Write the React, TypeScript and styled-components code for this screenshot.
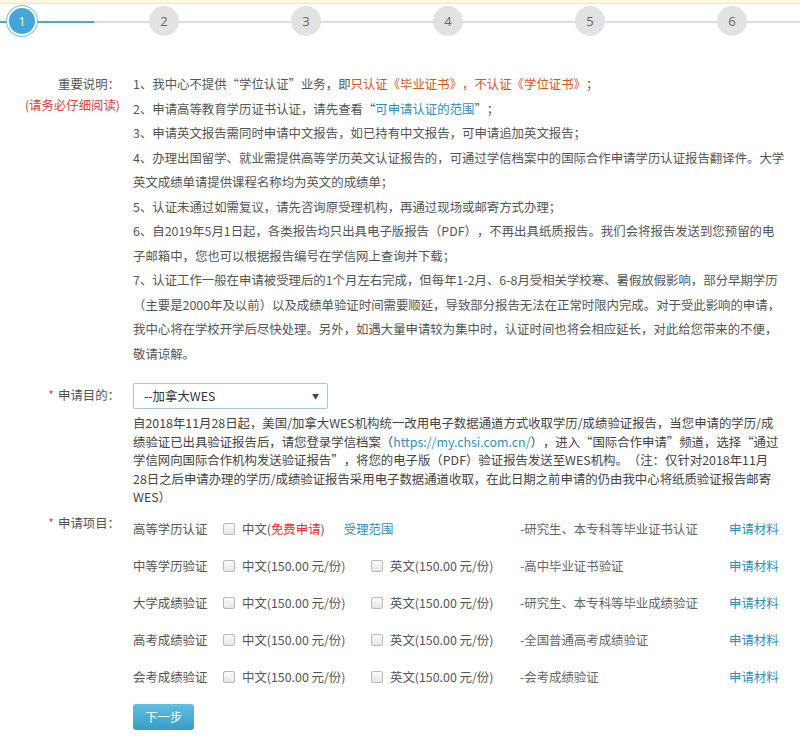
import React from "react";
import styled, { createGlobalStyle } from "styled-components";

const GlobalStyle = createGlobalStyle`
  html, body {
    margin: 0;
    padding: 0;
    background: #fff;
  }
  body {
    font-family: "Noto Sans CJK SC", "Noto Sans", sans-serif;
    color: #555;
    text-spacing-trim: space-all;
  }
`;

const Page = styled.div`
  width: 800px;
  min-height: 737px;
  background: #fff;
`;

const Notice = styled.div`
  height: 3px;
  background: #fef7df;
  border-bottom: 1px solid #f6e9bd;
`;

const Steps = styled.div`
  position: relative;
  display: flex;
  gap: 112px;
  padding: 2px 0 0 7px;
  height: 33px;

  &::before {
    content: "";
    position: absolute;
    left: 0;
    right: 0;
    top: 17px;
    height: 2px;
    background: #d9dee6;
  }
  &::after {
    content: "";
    position: absolute;
    left: 0;
    width: 94px;
    top: 17px;
    height: 2px;
    background: #4ea5d2;
  }
`;

const Step = styled.div<{ $active?: boolean }>`
  position: relative;
  z-index: 1;
  width: 30px;
  height: 30px;
  box-sizing: border-box;
  border-radius: 50%;
  display: flex;
  align-items: center;
  justify-content: center;
  font-family: "Open Sans", "Liberation Sans", sans-serif;
  font-size: 13px;
  color: ${(p) => (p.$active ? "#fff" : "#666")};
  background: ${(p) => (p.$active ? "#43a6da" : "#e2e2e2")};
  border: ${(p) => (p.$active ? "2px solid #fff" : "none")};
  box-shadow: ${(p) => (p.$active ? "0 0 0 1px #79bfe4" : "none")};
`;

const Form = styled.div`
  padding-top: 33px;
  display: flex;
  flex-direction: column;
`;

const Field = styled.div<{ $gap?: number }>`
  display: grid;
  grid-template-columns: 120px 652px;
  column-gap: 13px;
  margin-bottom: ${(p) => p.$gap ?? 0}px;
`;

const Label = styled.div`
  text-align: right;
  font-size: 12.4px;
  line-height: 21px;
  padding-top: 2px;
  color: #555;
`;

const Star = styled.span`
  color: #e0463a;
  margin-right: 4px;
`;

const Hint = styled.div`
  color: #e5403b;
`;

const Notes = styled.div`
  font-size: 12.4px;
  line-height: 24.5px;
  color: #555;
`;

const Warn = styled.span`
  color: #d8541f;
`;

const Link = styled.a`
  color: #2a8fc3;
  text-decoration: none;
`;

const Select = styled.div`
  width: 195px;
  height: 26px;
  box-sizing: border-box;
  border: 1px solid #a8c4df;
  border-radius: 2px;
  display: flex;
  align-items: center;
  justify-content: space-between;
  padding: 0 8px 0 10px;
  font-size: 12.4px;
  color: #333;
`;

const Arrow = styled.span`
  font-size: 7px;
  color: #444;
`;

const Purpose = styled.div`
  display: flex;
  flex-direction: column;
  gap: 5px;
`;

const PurposeText = styled.div`
  font-size: 12.4px;
  line-height: 18.6px;
  color: #444;
`;

const NoWrap = styled.span`
  white-space: nowrap;
`;

const Items = styled.div`
  display: flex;
  flex-direction: column;
`;

const ItemRow = styled.div`
  display: grid;
  grid-template-columns: 90px 148px 149px 209px auto;
  align-items: center;
  height: 37px;
  font-size: 12.4px;
  color: #555;
`;

const Check = styled.label`
  display: flex;
  align-items: center;
  gap: 7px;
  white-space: nowrap;
`;

const Box = styled.span`
  flex-shrink: 0;
  width: 10px;
  height: 10px;
  border: 1px solid #b9b9b9;
  border-radius: 2px;
  background: linear-gradient(#fafafa, #e6e6e6);
`;

const Free = styled.span`
  color: #e5322d;
`;

const Scope = styled(Link)`
  margin-left: 12px;
`;

const Desc = styled.span`
  color: #666;
`;

const Next = styled.button`
  margin-top: 8px;
  width: 61px;
  height: 26px;
  border: none;
  border-radius: 3px;
  background: linear-gradient(#5ec0e2, #3a9cc6);
  color: #fff;
  font-family: "Noto Sans CJK SC", sans-serif;
  font-size: 12.4px;
  padding: 0;
`;

const rows = [
  { name: "高等学历认证", free: true, desc: "-研究生、本专科等毕业证书认证" },
  { name: "中等学历验证", desc: "-高中毕业证书验证" },
  { name: "大学成绩验证", desc: "-研究生、本专科等毕业成绩验证" },
  { name: "高考成绩验证", desc: "-全国普通高考成绩验证" },
  { name: "会考成绩验证", desc: "-会考成绩验证" },
];

export default function App() {
  return (
    <Page>
      <GlobalStyle />
      <Notice />
      <Steps>
        {[1, 2, 3, 4, 5, 6].map((n) => (
          <Step key={n} $active={n === 1}>
            {n}
          </Step>
        ))}
      </Steps>
      <Form>
        <Field $gap={17}>
          <Label>
            <div>重要说明：</div>
            <Hint>(请务必仔细阅读)</Hint>
          </Label>
          <Notes>
            <div>
              1、我中心不提供“学位认证”业务，即
              <Warn>只认证《毕业证书》，不认证《学位证书》</Warn>；
            </div>
            <div>
              2、申请高等教育学历证书认证，请先查看“<Link href="#">可申请认证的范围</Link>”；
            </div>
            <div>3、申请英文报告需同时申请中文报告，如已持有中文报告，可申请追加英文报告；</div>
            <div>
              4、办理出国留学、就业需提供高等学历英文认证报告的，可通过学信档案中的国际合作申请学历认证报告翻译件。大学英文成绩单请提供课程名称均为英文的成绩单；
            </div>
            <div>5、认证未通过如需复议，请先咨询原受理机构，再通过现场或邮寄方式办理；</div>
            <div>
              6、自2019年5月1日起，各类报告均只出具电子版报告（PDF），不再出具纸质报告。我们会将报告发送到您预留的电子邮箱中，您也可以根据报告编号在学信网上查询并下载；
            </div>
            <div>
              7、认证工作一般在申请被受理后的1个月左右完成，但每年1-2月、6-8月受相关学校寒、暑假放假影响，部分早期学历（主要是2000年及以前）以及成绩单验证时间需要顺延，导致部分报告无法在正常时限内完成。对于受此影响的申请，我中心将在学校开学后尽快处理。另外，如遇大量申请较为集中时，认证时间也将会相应延长，对此给您带来的不便，敬请谅解。
            </div>
          </Notes>
        </Field>
        <Field $gap={4}>
          <Label>
            <Star>*</Star>申请目的：
          </Label>
          <Purpose>
            <Select>
              <span>--加拿大WES</span>
              <Arrow>▼</Arrow>
            </Select>
            <PurposeText>
              自2018年11月28日起，美国/加拿大WES机构统一改用电子数据通道方式收取学历/成绩验证报告，当您申请的学历/成绩验证已出具验证报告后，请您登录学信档案（
              <Link href="#">https://my.chsi.com.cn/</Link>），进入“国际合作申请”频道，选择“通过学信网向国际合作机构发送验证报告”，将您的电子版（PDF）验证报告发送至WES机构。（注：仅针对2018年11月
              <NoWrap>28日</NoWrap>之后申请办理的学历/成绩验证报告采用电子数据通道收取，在此日期之前申请的仍由我中心将纸质验证报告邮寄WES）
            </PurposeText>
          </Purpose>
        </Field>
        <Field>
          <Label>
            <Star>*</Star>申请项目：
          </Label>
          <Items>
            {rows.map((r) => (
              <ItemRow key={r.name}>
                <span>{r.name}</span>
                {r.free ? (
                  <Check>
                    <Box />
                    <span>
                      中文(<Free>免费申请</Free>)
                    </span>
                    <Scope href="#">受理范围</Scope>
                  </Check>
                ) : (
                  <Check>
                    <Box />
                    中文(150.00 元/份)
                  </Check>
                )}
                {r.free ? (
                  <span />
                ) : (
                  <Check>
                    <Box />
                    英文(150.00 元/份)
                  </Check>
                )}
                <Desc>{r.desc}</Desc>
                <Link href="#">申请材料</Link>
              </ItemRow>
            ))}
            <div>
              <Next>下一步</Next>
            </div>
          </Items>
        </Field>
      </Form>
    </Page>
  );
}
